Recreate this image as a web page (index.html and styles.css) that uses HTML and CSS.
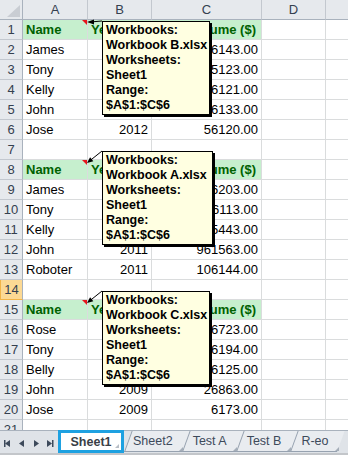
FILE: index.html
```html
<!DOCTYPE html>
<html lang="en">
<head>
  <meta charset="UTF-8">
  <title>Workbook Notes</title>
  <link rel="stylesheet" href="styles.css">
</head>
<body>
  <div class="sheet">
    <table class="grid">
      <colgroup>
        <col class="c-row"><col class="c-a"><col class="c-b"><col class="c-c"><col class="c-d"><col class="c-e">
      </colgroup>
      <tr class="colhead"><th class="corner"></th><th>A</th><th>B</th><th>C</th><th>D</th><th></th></tr>
      <tr><th>1</th><td class="hd cm">Name</td><td class="hd">Year</td><td class="hd num">Volume ($)</td><td></td><td></td></tr>
      <tr><th>2</th><td>James</td><td></td><td class="num">56143.00</td><td></td><td></td></tr>
      <tr><th>3</th><td>Tony</td><td></td><td class="num">55123.00</td><td></td><td></td></tr>
      <tr><th>4</th><td>Kelly</td><td></td><td class="num">56121.00</td><td></td><td></td></tr>
      <tr><th>5</th><td>John</td><td></td><td class="num">56133.00</td><td></td><td></td></tr>
      <tr><th>6</th><td>Jose</td><td class="num">2012</td><td class="num">56120.00</td><td></td><td></td></tr>
      <tr><th>7</th><td></td><td></td><td></td><td></td><td></td></tr>
      <tr><th>8</th><td class="hd cm">Name</td><td class="hd">Year</td><td class="hd num">Volume ($)</td><td></td><td></td></tr>
      <tr><th>9</th><td>James</td><td></td><td class="num">56203.00</td><td></td><td></td></tr>
      <tr><th>10</th><td>Tony</td><td></td><td class="num">56113.00</td><td></td><td></td></tr>
      <tr><th>11</th><td>Kelly</td><td></td><td class="num">55443.00</td><td></td><td></td></tr>
      <tr><th>12</th><td>John</td><td class="num">2011</td><td class="num">961563.00</td><td></td><td></td></tr>
      <tr><th>13</th><td>Roboter</td><td class="num">2011</td><td class="num">106144.00</td><td></td><td></td></tr>
      <tr><th class="sel">14</th><td></td><td></td><td></td><td></td><td></td></tr>
      <tr><th>15</th><td class="hd cm">Name</td><td class="hd">Year</td><td class="hd num">Volume ($)</td><td></td><td></td></tr>
      <tr><th>16</th><td>Rose</td><td></td><td class="num">56723.00</td><td></td><td></td></tr>
      <tr><th>17</th><td>Tony</td><td></td><td class="num">56194.00</td><td></td><td></td></tr>
      <tr><th>18</th><td>Belly</td><td></td><td class="num">56125.00</td><td></td><td></td></tr>
      <tr><th>19</th><td>John</td><td class="num">2009</td><td class="num">26863.00</td><td></td><td></td></tr>
      <tr><th>20</th><td>Jose</td><td class="num">2009</td><td class="num">6173.00</td><td></td><td></td></tr>
      <tr><th>21</th><td></td><td></td><td></td><td></td><td></td></tr>
    </table>

    <!-- comment arrows, from each note to its cell -->
    <svg class="arrows" width="348" height="430">
      <line x1="102" y1="21" x2="90" y2="22" stroke="#000" stroke-width="1"/>
      <polygon points="87,22 94,19.5 94,24.5" fill="#000"/>
      <line x1="102" y1="151" x2="90" y2="160.6" stroke="#000" stroke-width="1"/>
      <polygon points="87,163 93.3,161.2 90.1,157.3" fill="#000"/>
      <line x1="102" y1="291" x2="90" y2="300.6" stroke="#000" stroke-width="1"/>
      <polygon points="87,303 93.3,301.2 90.1,297.3" fill="#000"/>
    </svg>

    <div class="note note-b">Workbooks:<br>Workbook B.xlsx<br>Worksheets:<br>Sheet1<br>Range:<br>$A$1:$C$6</div>
    <div class="note note-a">Workbooks:<br>Workbook A.xlsx<br>Worksheets:<br>Sheet1<br>Range:<br>$A$1:$C$6</div>
    <div class="note note-c">Workbooks:<br>Workbook C.xlsx<br>Worksheets:<br>Sheet1<br>Range:<br>$A$1:$C$6</div>
  </div>

  <div class="tabbar">
    <svg class="nav" width="56" height="23">
      <rect x="4" y="9" width="1.5" height="7" fill="#3d4a5b"/>
      <polygon points="5,12.5 10,9 10,16" fill="#3d4a5b"/>
      <polygon points="19,12.5 24,9 24,16" fill="#3d4a5b"/>
      <polygon points="39,12.5 34,9 34,16" fill="#3d4a5b"/>
      <polygon points="52,12.5 47,9 47,16" fill="#3d4a5b"/>
      <rect x="52" y="9" width="1.5" height="7" fill="#3d4a5b"/>
    </svg>
    <div class="tab active">Sheet1</div>
    <div class="tab first">Sheet2</div>
    <div class="tab">Test A</div>
    <div class="tab">Test B</div>
    <div class="tab">R-eo</div>
  </div>
  <div class="hscroll"></div>
</body>
</html>
```

FILE: styles.css
```css
body { margin: 0; background: #fff; font-family: "Liberation Sans", Arial, sans-serif; }

.sheet { position: relative; width: 348px; height: 430px; overflow: hidden; }

.grid { border-collapse: separate; border-spacing: 0; table-layout: fixed; width: 356px; font-size: 13px; color: #000; }
.c-row { width: 23px; }
.c-a { width: 65px; }
.c-b { width: 64px; }
.c-c { width: 110px; }
.c-d { width: 64px; }
.c-e { width: 30px; }

.grid tr { height: 20px; }
.grid th, .grid td {
  padding: 0 3px; line-height: 18px; white-space: nowrap; overflow: hidden;
  border-right: 1px solid #dadcdd; border-bottom: 1px solid #dadcdd;
}
.grid th {
  background: #e6e9ed; color: #34404f; font-weight: normal; text-align: center;
  border-right-color: #c3c8cf; border-bottom-color: #c3c8cf;
}
.grid tr th:first-child { padding: 0; border-right-color: #a9b2bd; }
.colhead th { border-bottom-color: #a9b2bd; }
.corner { position: relative; }
.corner::after {
  content: ''; position: absolute; right: 2px; bottom: 2px;
  border-left: 13px solid transparent; border-bottom: 12px solid #c9cdd3;
}
.grid th.sel { background: #fcd994; border: 1px solid #f2b447; border-top: none; }

.num { text-align: right; }
.hd { background: #c6efce; color: #006100; font-weight: bold; border-right-color: #c6efce; }
.hd.num { padding-right: 5px; }
.cm { position: relative; }
.cm::after {
  content: ''; position: absolute; top: 0; right: 0;
  border-left: 5px solid transparent; border-top: 5px solid #e8141c;
}

.arrows { position: absolute; left: 0; top: 0; }

.note {
  position: absolute; left: 102px; padding: 1px 3px;
  background: #ffffe1; border: 1px solid #000; box-shadow: 2px 2px 0 #000;
  font-size: 12.5px; font-weight: bold; line-height: 15px; color: #000; white-space: nowrap;
}
.note-b { top: 21px; width: 100px; }
.note-a { top: 151px; width: 103px; }
.note-c { top: 291px; width: 100px; }

.tabbar {
  position: relative; z-index: 0; display: flex; align-items: flex-start;
  height: 23px; background: #dfe3e8; border-top: 1px solid #a9b2bd; box-sizing: border-box;
}
.nav { flex: none; }
.tab {
  position: relative; height: 21px; padding: 0 9px 0 11px;
  font-size: 12.5px; line-height: 21px; color: #3d4a5b;
}
.tab::before {
  content: ''; position: absolute; inset: 0; z-index: -1;
  background: #e9ecf0; border-left: 1px solid #97a2b0; border-bottom: 1px solid #97a2b0;
  transform: skewX(-20deg); transform-origin: bottom left;
}
.tab::after {
  content: ''; position: absolute; right: -1px; bottom: 1px;
  border-left: 4px solid transparent; border-bottom: 4px solid #a5aeb9;
}
.tab.first { padding-left: 9px; }
.tab.active {
  margin: -1px 0 0 2px; width: 66px; height: 23px; padding: 0; box-sizing: border-box;
  background: #fff; border: 3px solid #1ea1e1; text-align: center;
  font-weight: bold; color: #3a3f47; line-height: 19px; z-index: 1;
}
.tab.active::before { display: none; }
.tab.active::after { right: 2px; bottom: 2px; border-bottom-color: #b8bec6; }

.hscroll { height: 2px; background: #c3c6ca; }
```
